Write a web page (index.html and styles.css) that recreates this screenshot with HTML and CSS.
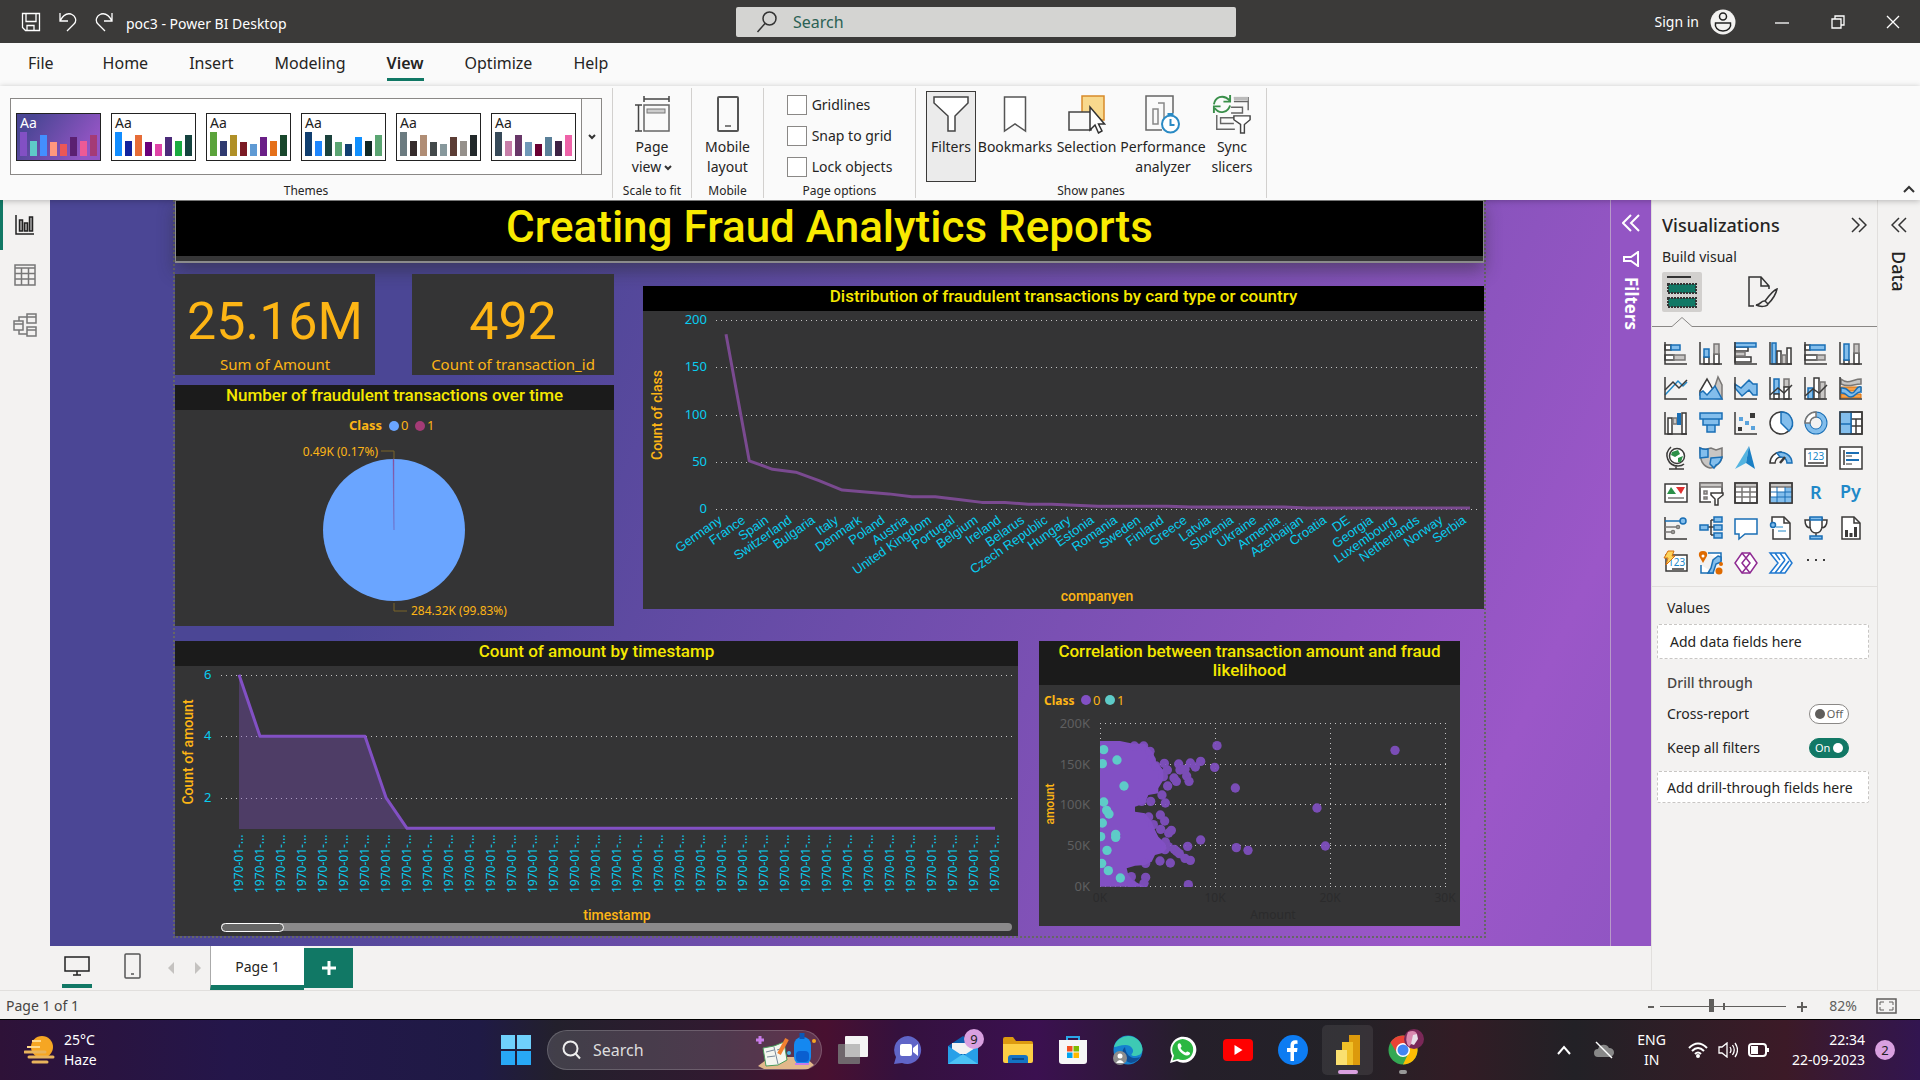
FILE: index.html
```html
<!DOCTYPE html>
<html lang="en">
<head>
<meta charset="utf-8">
<meta name="viewport" content="width=device-width, initial-scale=1">
<title>poc3 - Power BI Desktop</title>
<link rel="stylesheet" href="styles.css">
</head>
<body>
<header class="titlebar">
  <div class="titlebar-left">
    <button class="bare" aria-label="Save"><svg width="20" height="20" viewBox="0 0 20 20" class="line-white"><path d="M1.500 1.500h17v17H4.500l-3-3zM5 1.500v8h10v-8M6 18.500v-5h7v5"/></svg></button>
    <button class="bare" aria-label="Undo"><svg width="18" height="20" viewBox="0 0 18 20" class="line-white"><path d="M1 1v8h8M1 9C4 3 8 1 12 2c5 2 6 7 3 10l-7 7"/></svg></button>
    <button class="bare" aria-label="Redo"><svg width="18" height="20" viewBox="0 0 18 20" class="line-white"><path d="M17 1v8H9M17 9C14 3 10 1 6 2c-5 2-6 7-3 10l7 7"/></svg></button>
    <span class="doc-name">poc3 - Power BI Desktop</span>
  </div>
  <label class="top-search">
    <svg width="22" height="24" viewBox="0 0 22 24" fill="none" stroke="#333" stroke-width="1.500"><circle cx="13.500" cy="8.500" r="6.500"/><path d="M9 13.500 1.500 22"/></svg>
    <input type="text" placeholder="Search" aria-label="Search">
  </label>
  <div class="titlebar-right">
    <a href="#" class="signin">Sign in</a>
    <svg class="avatar" width="26" height="26" viewBox="0 0 26 26"><circle cx="13" cy="13" r="12.500" fill="#f3f2f1"/><circle cx="13" cy="7.500" r="3.500" fill="none" stroke="#222" stroke-width="1.500"/><path d="M5.500 14h15c1 4-2 8-7.500 8s-8.500-4-7.500-8z" fill="none" stroke="#222" stroke-width="1.500"/></svg>
    <button class="win-btn" aria-label="Minimize"><svg width="14" height="14" viewBox="0 0 14 14" class="line-white"><path d="M0 8h14"/></svg></button>
    <button class="win-btn" aria-label="Restore"><svg width="14" height="14" viewBox="0 0 14 14" class="line-white"><path d="M1 4h9v9H1zM4 4V1h9v9h-3"/></svg></button>
    <button class="win-btn" aria-label="Close"><svg width="14" height="14" viewBox="0 0 14 14" class="line-white"><path d="M1 1l12 12M13 1 1 13"/></svg></button>
  </div>
</header>

<nav class="tabs">
  <a href="#">File</a><a href="#">Home</a><a href="#">Insert</a><a href="#">Modeling</a><a href="#" class="active">View</a><a href="#">Optimize</a><a href="#">Help</a>
</nav>

<section class="ribbon">
  <div class="group group-themes">
    <div class="gallery">
      <div class="thumbs" id="themes"></div>
      <button class="gallery-more" aria-label="More themes"><svg width="8" height="6" viewBox="0 0 8 6" class="line-dark bold"><path d="M1 1l3 3 3-3"/></svg></button>
    </div>
    <div class="group-name">Themes</div>
  </div>
  <div class="group group-scale">
    <button class="tool"><svg width="36" height="38" viewBox="0 0 36 38" fill="none" stroke="#444" stroke-width="1.500"><path d="M10 1v6M35 1v6M10 4h25M1 10h7M1 36h7M4.500 10v26"/><rect x="10" y="10" width="25" height="26" stroke="#666" fill="#fafafa"/><rect x="13" y="14" width="18" height="4" fill="#ccc" stroke="#777" stroke-width="1"/></svg><span>Page<br>view<svg width="8" height="8" viewBox="0 0 8 8" class="line-dark bold caret"><path d="M1 2l3 3 3-3"/></svg></span></button>
    <div class="group-name">Scale to fit</div>
  </div>
  <div class="group group-mobile">
    <button class="tool"><svg width="24" height="38" viewBox="0 0 24 38" fill="none" stroke="#555" stroke-width="2"><rect x="2" y="2" width="20" height="34" rx="1"/><path d="M9 31h6" stroke-width="1.500"/></svg><span>Mobile<br>layout</span></button>
    <div class="group-name">Mobile</div>
  </div>
  <div class="group group-options">
    <div class="checks">
      <label><input type="checkbox">Gridlines</label>
      <label><input type="checkbox">Snap to grid</label>
      <label><input type="checkbox">Lock objects</label>
    </div>
    <div class="group-name">Page options</div>
  </div>
  <div class="group group-panes">
    <div class="tools">
      <button class="tool pressed"><svg width="36" height="38" viewBox="0 0 36 38" fill="#fff" stroke="#444" stroke-width="1.500"><path d="M1 2h34v6L22 21v15h-7V21L1 8z"/></svg><span>Filters</span></button>
      <button class="tool w-bookmark"><svg width="24" height="38" viewBox="0 0 24 38" fill="#fff" stroke="#555" stroke-width="1.500"><path d="M1.500 2h21v34L12 29 1.500 36z"/></svg><span>Bookmarks</span></button>
      <button class="tool w-selection"><svg width="38" height="40" viewBox="0 0 38 40"><path d="M14 2h22v24H14z" fill="#f8d98d" stroke="#d88a2a" stroke-width="1.500"/><path d="M1 18h22v18H1z" fill="#fafafa" stroke="#444" stroke-width="1.500"/><path d="M22 13v23l5-5 3.500 8 3.500-2-3.500-7h6z" fill="#fff" stroke="#333" stroke-width="1.500"/></svg><span>Selection</span></button>
      <button class="tool w-performance"><svg width="36" height="40" viewBox="0 0 36 40" fill="none" stroke="#666" stroke-width="1.500"><path d="M17 36H1V2h27v17"/><path d="M8 15h5v15H8zM13 9h6v19" stroke="#888"/><circle cx="25.500" cy="30" r="8.500" stroke="#2a8ac4" stroke-width="2" fill="#fff"/><path d="M25.500 25v6h4M22.500 20h6" stroke="#2a8ac4" stroke-width="2"/></svg><span>Performance<br>analyzer</span></button>
      <button class="tool w-sync"><svg width="40" height="42" viewBox="0 0 40 42" fill="none" stroke="#666" stroke-width="1.500"><path d="M22 4h15v13M22 8h15M4 22v15h19M12 37h8M19 14h12v6H19M24 25H8v6h14"/><path d="M22 3h15v4H22z" fill="#bbb" stroke="none"/><path d="M22 23h17v4l-6 5v9h-4v-9l-7-5z" fill="#fff" stroke="#444"/><path d="M1 11C2 4 10-1 18 7M18 1v7h-7M18 12c-2 7-11 10-16 3M1 20v-7h7" stroke="#3a8f4a" stroke-width="2"/></svg><span>Sync<br>slicers</span></button>
    </div>
    <div class="group-name">Show panes</div>
  </div>
  <button class="bare collapse" aria-label="Collapse ribbon"><svg width="12" height="8" viewBox="0 0 12 8" class="line-dark bold"><path d="M1 7l5-5 5 5"/></svg></button>
</section>

<main class="workspace">
  <nav class="rail">
    <button class="rail-btn active" aria-label="Report view"><svg width="20" height="22" viewBox="0 0 20 22" fill="none" stroke="#222" stroke-width="1.500"><path d="M1 1v19h18"/><path d="M4.500 6h3v11h-3zM9.500 9h3v8h-3zM14.500 3h3v14h-3z" fill="#aaa"/></svg></button>
    <button class="rail-btn" aria-label="Table view"><svg width="22" height="22" viewBox="0 0 22 22" fill="none" stroke="#777" stroke-width="1.500"><path d="M1 1h20v20H1zM1 4h20M1 9.500h20M1 15h20M7.500 4v17M14.500 4v17"/></svg></button>
    <button class="rail-btn" aria-label="Model view"><svg width="24" height="24" viewBox="0 0 24 24" fill="none" stroke="#777" stroke-width="1.500"><path d="M1 8h9v9H1zM1 11h9M14 1h9v9h-9zM14 4h9M14 14h9v9h-9zM14 17h9M6 8V4h8M6 17v4h8"/></svg></button>
  </nav>

  <div class="stage">
    <div class="canvas">
      <div class="page">
        <div class="headline"><h1>Creating Fraud Analytics Reports</h1></div>
        <div class="row-top">
          <div class="left-stack">
            <div class="kpis">
              <article class="kpi"><strong>25.16M</strong><span>Sum of Amount</span></article>
              <article class="kpi"><strong>492</strong><span>Count of transaction_id</span></article>
            </div>
            <article class="visual pie">
              <h2>Number of fraudulent transactions over time</h2>
              <svg viewBox="0 0 439 216" class="chart">
                <g class="legend"><text x="174" y="20" class="strong">Class</text><circle cx="219" cy="16" r="5" fill="#6aa5ff"/><text x="226" y="20">0</text><circle cx="245" cy="16" r="5" fill="#a43b76"/><text x="252" y="20">1</text>
                <text x="203" y="46" text-anchor="end" class="small">0.49K (0.17%)</text><text x="236" y="205" class="small">284.32K (99.83%)</text></g>
                <path d="M206 41h13v8M219 193v8h13" fill="none" stroke="#7b6428"/>
                <circle cx="219" cy="120" r="71" fill="#6aa5ff"/><path d="M219 120 218 49h1z" fill="#a43b76" stroke="#6c6ac0" stroke-width=".5"/>
              </svg>
            </article>
          </div>
          <article class="visual countries">
            <h2>Distribution of fraudulent transactions by card type or country</h2>
            <svg viewBox="0 0 841 298" class="chart" id="countries"></svg>
          </article>
        </div>
        <div class="row-bottom">
          <article class="visual time">
            <h2>Count of amount by timestamp</h2>
            <svg viewBox="0 0 843 270" class="chart" id="timestamps"></svg>
          </article>
          <article class="visual scatter">
            <h2>Correlation between transaction amount and fraud likelihood</h2>
            <svg viewBox="0 0 421 241" class="chart" id="scatter"></svg>
          </article>
        </div>
      </div>
      <aside class="filters">
        <button class="bare" aria-label="Expand filters"><svg width="18" height="18" viewBox="0 0 18 18" class="line-white bold"><path d="M9 1 1 9l8 8M17 1 9 9l8 8"/></svg></button>
        <svg class="funnel" width="16" height="16" viewBox="0 0 16 16" class="line-white bold"><path d="M15 1v14L8 10H1V6h7z"/></svg>
        <span>Filters</span>
      </aside>
    </div>
    <footer class="pages">
      <button class="device active" aria-label="Desktop layout"><svg width="26" height="20" viewBox="0 0 26 20" fill="none" stroke="#222" stroke-width="1.500"><path d="M1 1h24v14H1zM13 15v4M9 19h8"/></svg></button>
      <button class="device phone" aria-label="Mobile layout"><svg width="18" height="26" viewBox="0 0 18 26" fill="none" stroke="#555" stroke-width="1.500"><rect x="1" y="1" width="15" height="24" rx="1"/><path d="M7 21h3"/></svg></button>
      <button class="bare step" aria-label="Previous page"><svg width="6" height="12" viewBox="0 0 6 12"><path d="M6 0v12L0 6z" fill="#c4c2c0"/></svg></button>
      <button class="bare step" aria-label="Next page"><svg width="6" height="12" viewBox="0 0 6 12"><path d="M0 0v12l6-6z" fill="#c4c2c0"/></svg></button>
      <button class="page-tab">Page 1</button>
      <button class="add-page" aria-label="New page"><svg width="14" height="14" viewBox="0 0 14 14"><path d="M7 0v14M0 7h14" stroke="#fff" stroke-width="3"/></svg></button>
    </footer>
  </div>

  <aside class="viz">
    <div class="viz-head"><h3>Visualizations</h3><button class="bare" aria-label="Collapse"><svg width="16" height="16" viewBox="0 0 16 16" class="line-dark"><path d="M1 1l7 7-7 7M8 1l7 7-7 7"/></svg></button></div>
    <div class="build">Build visual</div>
    <div class="modes">
      <button class="mode on" aria-label="Build visual"><svg width="30" height="32" viewBox="0 0 30 32"><path d="M0 1h24" stroke="#333" stroke-width="2"/><path d="M1 8h28v9H1zM1 22h28v9H1z" fill="#117865" stroke="#333" stroke-width="2" stroke-dasharray="2 1"/></svg></button>
      <button class="mode" aria-label="Format page"><svg width="32" height="32" viewBox="0 0 32 32" class="line-dark"><path d="M7 30H2V1h12l8 9v3M14 1v9h8"/><path d="M30 13c-3 1-9 8-12 12l3 3c4-4 8-10 9-15zM18 25c-4-1-4 4-9 4 4 2 11 2 12-1"/></svg></button>
    </div>
    <svg class="notch" viewBox="0 0 226 12" height="12" preserveAspectRatio="xMinYMin slice"><path d="M0 10.500h20l10-9 10 9h600" fill="none" stroke="#8a8886"/></svg>
    <div class="viz-grid" id="viz-grid"></div>
    <div class="wells">
      <div class="well-title">Values</div>
      <div class="well">Add data fields here</div>
      <div class="well-title strong">Drill through</div>
      <div class="switch-row"><label for="cross">Cross-report</label><span class="switch"><input type="checkbox" id="cross"><i>Off</i></span></div>
      <div class="switch-row"><label for="keep">Keep all filters</label><span class="switch on"><i>On</i><input type="checkbox" id="keep" checked></span></div>
      <div class="well drill">Add drill-through fields here</div>
    </div>
  </aside>
  <aside class="data">
    <button class="bare" aria-label="Expand data"><svg width="16" height="16" viewBox="0 0 16 16" class="line-dark"><path d="M8 1 1 8l7 7M15 1 8 8l7 7"/></svg></button>
    <span>Data</span>
  </aside>
</main>

<footer class="status">
  <span>Page 1 of 1</span>
  <div class="zoom">
    <button class="bare" aria-label="Zoom out"><svg width="6" height="12" viewBox="0 0 6 12"><path d="M0 7h6" stroke="#605e5c" stroke-width="2"/></svg></button>
    <input type="range" min="0" max="100" value="40" aria-label="Zoom">
    <button class="bare" aria-label="Zoom in"><svg width="10" height="12" viewBox="0 0 10 12"><path d="M0 7h10M5 2v10" stroke="#605e5c" stroke-width="2"/></svg></button>
    <span class="percent">82%</span>
    <button class="bare" aria-label="Fit to page"><svg width="21" height="16" viewBox="0 0 21 16" fill="none" stroke="#605e5c"><path d="M1 1h19v14H1z" stroke-width="1.500"/><path d="M4 7V4h4M13 4h4v3M17 9v3h-4M8 12H4V9"/></svg></button>
  </div>
</footer>

<footer class="taskbar">
  <div class="weather">
    <svg width="32" height="30" viewBox="0 0 32 30"><circle cx="18" cy="12" r="11" fill="#f6a623"/><path d="M8 6h9M3 12h13" stroke="#ffd98a" stroke-width="2"/><path d="M1 17h20M5 22h24M9 27h14" stroke="#e8b45c" stroke-width="3" stroke-linecap="round"/></svg>
    <div>25°C<br>Haze</div>
  </div>
  <div class="apps">
    <button class="app start" aria-label="Start"><svg width="30" height="30" viewBox="0 0 30 30"><path d="M0 0h14v14H0zM16 0h14v14H16z" fill="#6fd0fb"/><path d="M0 16h14v14H0zM16 16h14v14H16z" fill="#28a8f5"/></svg></button>
    <label class="task-search">
      <svg width="20" height="20" viewBox="0 0 20 20" fill="none" stroke="#eee" stroke-width="2"><circle cx="8.500" cy="8.500" r="7"/><path d="M13.500 13.500 18 18.500"/></svg>
      <input type="text" placeholder="Search" aria-label="Search Windows">
      <svg width="60" height="38" viewBox="0 0 60 38"><path d="M2 35 14 26h35l9 8-6 4H8z" fill="#e2b88b"/><path d="M7 17l11-2 10-4 3 18-9 5-12 1z" fill="#f4f6ef" stroke="#4a9b5a"/><path d="M18 16l4 17M10 21l8-2M11 26l8-1M21 19l6-2" stroke="#789"/><path d="M31 8l-8 15" stroke="#f08030" stroke-width="4"/><path d="M4 5v8M0 9h8" stroke="#c77be8" stroke-width="3"/><rect x="38" y="6" width="17" height="28" rx="8" fill="#1488f0"/><path d="M46 2v6" stroke="#0b58b8" stroke-width="5"/><rect x="40" y="20" width="13" height="11" rx="4" fill="#0a5fd0"/><path d="M39 33h14" stroke="#c77be8" stroke-width="2"/><circle cx="58" cy="10" r="2" fill="#f5a623"/><circle cx="33" cy="22" r="2" fill="#44b5e8"/></svg>
    </label>
    <button class="app" aria-label="Task view"><svg width="30" height="30" viewBox="0 0 30 30"><rect x="7" y="1" width="23" height="21" rx="1" fill="#f4f4f4"/><rect x="0" y="9" width="22" height="20" rx="1" fill="#777" opacity=".85"/><path d="M7 9h15v13H7z" fill="#bdbdbd"/></svg></button>
    <button class="app" aria-label="Chat"><svg width="30" height="30" viewBox="0 0 30 30"><path d="M15 1a14 14 0 1 1-6 27l-8 1 2-7A14 14 0 0 1 15 1z" fill="#6065c8"/><rect x="7" y="9" width="12" height="12" rx="2" fill="#fff"/><path d="M20 13l5-4v12l-5-4z" fill="#fff"/></svg></button>
    <button class="app" aria-label="Mail"><svg width="32" height="30" viewBox="0 0 32 30"><path d="M1 11 16 1l15 10v18H1z" fill="#0c5fae"/><path d="M5 8h22v11H5z" fill="#f2f2f2"/><path d="M1 11l15 10 15-10v18H1z" fill="#27a0e8"/><path d="M1 29 16 19l15 10z" fill="#4cc2f5"/></svg><b class="badge">9</b></button>
    <button class="app" aria-label="File Explorer"><svg width="30" height="28" viewBox="0 0 30 28"><path d="M0 3q0-2 2-2h8l3 4h15q2 0 2 2v4H0z" fill="#dc9a10"/><path d="M0 8h30v17q0 2-2 2H2q-2 0-2-2z" fill="#fccf45"/><path d="M5 27v-5q0-3 3-3h14q3 0 3 3v5z" fill="#1473c4"/><path d="M9 23h12" stroke="#0a4a88" stroke-width="2"/></svg></button>
    <button class="app" aria-label="Microsoft Store"><svg width="30" height="30" viewBox="0 0 30 30"><path d="M9 6V2h12v4" fill="none" stroke="#2ba7e8" stroke-width="2"/><path d="M1 5h28v21q0 3-3 3H4q-3 0-3-3z" fill="#f6f6f6"/><path d="M9 11h5.500v5.500H9z" fill="#f25022"/><path d="M15.500 11H21v5.500h-5.500z" fill="#7fba00"/><path d="M9 17.500h5.500V23H9z" fill="#00a4ef"/><path d="M15.500 17.500H21V23h-5.500z" fill="#ffb900"/></svg></button>
    <button class="app" aria-label="Edge"><svg width="30" height="30" viewBox="0 0 30 30"><circle cx="15" cy="15" r="14.500" fill="#1580cf"/><path d="M1 12A14.500 14.500 0 0 1 29.500 14c0 5-4 7-8 7-3 0-4-1-2-3 2-3-1-8-7-8-5 0-9 2-11.500 2z" fill="#3dcab4"/><path d="M12 12c-5 4-3 14 6 16 5-1 8-4 9-6-6 3-14 0-15-10z" fill="#0f4f98"/><circle cx="7" cy="23" r="7" fill="#8d8d8d"/><circle cx="7" cy="21" r="2.500" fill="#fff"/><path d="M3 28q4-6 8 0z" fill="#fff"/></svg></button>
    <button class="app" aria-label="WhatsApp"><svg width="28" height="28" viewBox="0 0 28 28"><path d="M1 27l2-7a13 13 0 1 1 5 5z" fill="#fff"/><path d="M3.500 24.500l1.500-5a10.500 10.500 0 1 1 4 3.500z" fill="#2cb742"/><path d="M9 8c2-2 3 0 3.500 2 .5 1-1 1.500-1 2 1 2 3 4 5 4.500 1 0 1-1.500 2-1 3 1 3 2 2 3-4 4-14-5-11.500-10.500z" fill="#fff"/></svg></button>
    <button class="app" aria-label="YouTube"><svg width="30" height="22" viewBox="0 0 30 22"><rect width="30" height="22" rx="4" fill="#f00"/><path d="M11.500 6v10l8-5z" fill="#fff"/></svg></button>
    <button class="app" aria-label="Facebook"><svg width="30" height="30" viewBox="0 0 30 30"><circle cx="15" cy="15" r="15" fill="#0d7cf2"/><path d="M12.500 26V17H9v-4h3.500v-3c0-4 3-5.500 7-4.500v3.500c-2.500-.5-3.500 0-3.500 2v2h3.500l-.5 4h-3v9z" fill="#fff"/></svg></button>
    <button class="app tile" aria-label="Power BI"><svg width="26" height="30" viewBox="0 0 26 30"><path d="M14 0h11v30H14z" fill="#dc9a0c"/><path d="M7 7h11v23H7z" fill="#f0c028"/><path d="M1 15h11v15H1z" fill="#fae070"/></svg></button>
    <button class="app dot" aria-label="Chrome"><svg width="30" height="30" viewBox="0 0 30 30"><circle cx="15" cy="15" r="14.500" fill="#34a853"/><path d="M2.500 7.500A14.500 14.500 0 0 1 28 8.500L15 9 9 18z" fill="#ea4335"/><path d="M28 8.500A14.500 14.500 0 0 1 15 29.500L21 17 17 8.500z" fill="#fbbc04"/><circle cx="15" cy="15" r="7" fill="#fff"/><circle cx="15" cy="15" r="5.500" fill="#4285f4"/></svg><svg class="profile" width="20" height="20" viewBox="0 0 20 20"><circle cx="10" cy="10" r="10" fill="#7a2858"/><path d="M4 3q7-3 9 2l-3 6-5 7q-5-6-1-15z" fill="#d98ab0"/><path d="M9 6l4-1 1 5-4 6-3-1z" fill="#e8e0e8"/></svg></button>
  </div>
  <div class="tray">
    <button class="bare" aria-label="Hidden icons"><svg width="14" height="10" viewBox="0 0 14 10" class="line-white bold"><path d="M1 9l6-7 6 7"/></svg></button>
    <svg class="cloud" width="22" height="18" viewBox="0 0 22 18"><path d="M5 16a4 4 0 0 1 0-8 6 6 0 0 1 11-1 4.500 4.500 0 0 1 1 9z" fill="#888"/><path d="M3 1l16 16" stroke="#fff" stroke-width="1.500"/></svg>
    <div class="lang">ENG<br>IN</div>
    <svg width="20" height="16" viewBox="0 0 20 16" class="line-white bold"><path d="M1 6q9-9 18 0M4 9q6-6 12 0M7 12q3-3 6 0"/><circle cx="10" cy="14" r="1"/></svg>
    <svg width="20" height="16" viewBox="0 0 20 16" class="line-white"><path d="M1 5h3l5-4v14l-5-4H1zM12 5q2 3 0 6M14.500 3q3.500 5 0 10M17 1q5 7 0 14"/></svg>
    <svg width="22" height="14" viewBox="0 0 22 14" class="line-white bold"><rect x="1" y="1" width="17" height="12" rx="3"/><path d="M20 5v4"/><path d="M4 4h5v6H4z" fill="#fff"/></svg>
    <div class="clock">22:34<br>22-09-2023</div>
    <b class="bell">2</b>
  </div>
</footer>
<script src="app.js"></script>
</body>
</html>
```
FILE: styles.css
```css
* { box-sizing: border-box; }
body {
  margin: 0;
  min-height: 100vh;
  display: grid;
  grid-template-rows: auto auto auto 1fr auto auto;
  font: 14px/20px "Noto Sans", "Open Sans", sans-serif;
  color: #252423;
  background: #f3f2f1;
}
button, input { font: inherit; color: inherit; }
button { border: 0; background: none; padding: 0; }
a { color: inherit; text-decoration: none; }
svg { display: block; flex: none; }
h1, h2, h3 { margin: 0; font-weight: 500; }
.bare { display: flex; align-items: center; }
.line-white { fill: none; stroke: #fff; stroke-width: 1.3; }
.line-dark { fill: none; stroke: #333; stroke-width: 1.5; }
.line-white.bold, .line-dark.bold { stroke-width: 2; }

/* title bar */
.titlebar { height: 43px; background: #3b3a39; color: #fff; display: grid; grid-template-columns: 1fr 500px 1fr; align-items: center; }
.titlebar-left { display: flex; align-items: center; gap: 18px; padding-left: 21px; }
.doc-name { margin-left: -5px; padding-top: 5px; }
.top-search { height: 30px; margin: 0 -26px 0 26px; background: #d4d4d2; border-radius: 2px; display: flex; align-items: center; gap: 15px; padding-left: 20px; }
.top-search input { border: 0; background: none; padding: 0; font-size: 16px; width: 100%; outline: 0; }
.top-search input::placeholder { color: #2b6154; opacity: 1; }
.titlebar-right { display: flex; justify-content: flex-end; align-items: center; }
.avatar { margin: 0 18px 0 11px; }
.win-btn { width: 56px; height: 43px; display: flex; align-items: center; justify-content: center; }
.win-btn:last-child { width: 54px; }

/* ribbon */
.tabs { display: flex; height: 43px; background: #fafafa; font-size: 16px; padding: 8px 0 0 28px; gap: 41px; }
.tabs a { line-height: 24px; height: 30px; }
.tabs a:first-child { margin-right: 8px; }
.tabs .active { font-weight: 600; border-bottom: 3px solid #117865; }
.ribbon { display: flex; background: #fafafa; height: 114px; box-shadow: 0 1px 6px rgba(0,0,0,.25); position: relative; z-index: 1; }
.group { margin: 2px 0; border-right: 1px solid #d2d0ce; display: flex; flex-direction: column; align-items: center; }
.group-name { margin-top: auto; font-size: 12px; line-height: 14px; }
.group-themes { width: 613px; padding: 10px 10px 0; }
.group-scale { width: 79px; }
.group-mobile { width: 72px; }
.group-options { width: 152px; }
.group-panes { width: 351px; }
.gallery { width: 592px; height: 77px; border: 1px solid #8a8886; background: #fff; display: flex; }
.thumbs { flex: 1; display: flex; gap: 10px; align-items: center; padding-left: 5px; }
.thumbs button { background: #fff; }
.thumb-name { font: 14px "Noto Sans", sans-serif; }
.gallery-more { width: 20px; border-left: 1px solid #8a8886; background: #fafafa; display: grid; place-items: center; }
.tool { display: flex; flex-direction: column; align-items: center; height: 91px; margin-top: 3px; padding-top: 2px; border: 1px solid transparent; }
.tool > svg { height: 40px; }
.tool span { margin-top: 3px; white-space: nowrap; }
.caret { display: inline-block; margin-left: 3px; }
.checks { padding: 7px 0 0; display: flex; flex-direction: column; gap: 11px; }
.checks label { display: flex; align-items: center; gap: 5px; }
.checks input { appearance: none; width: 20px; height: 20px; margin: 0; border: 1px solid #8a8886; background: #fff; }
.tools { display: flex; width: 100%; padding-left: 10px; }
.pressed { width: 50px; background: #ebebeb; border-color: #3b3a39; }
.w-bookmark { width: 78px; }
.w-selection { width: 65px; }
.w-performance { width: 88px; }
.w-sync { width: 50px; }
.collapse { margin: auto 5px 7px auto; }

/* workspace */
.workspace { display: flex; min-width: 0; }
.rail { width: 50px; flex: none; }
.rail-btn { width: 50px; height: 50px; display: grid; place-items: center; }
.rail-btn.active { box-shadow: inset 3px 0 #117865; }
.stage { flex: 1; min-width: 0; display: flex; flex-direction: column; }
.canvas { flex: 1; display: flex; background: linear-gradient(115deg, #4b4695 25%, #9b57c8 88%, #8f55c2 100%); }
.page { flex: 1; min-width: 0; margin: 0 124px 8px 123px; border: 2px dotted #666; border-top: 0; font-family: Roboto, "Noto Sans", sans-serif; }
.headline { height: 63px; border: 1px solid #8b8b8b; border-bottom-width: 2px; background: linear-gradient(#000 55px, #363637 55px); box-shadow: 0 8px 16px rgba(40,40,40,.45); }
.headline h1 { text-align: center; color: #f8ea00; font-size: 44px; line-height: 52px; }
.row-top { display: grid; grid-template-columns: 439fr 841fr; gap: 29px; padding-top: 11px; }
.left-stack { display: flex; flex-direction: column; gap: 10px; }
.kpis { display: grid; grid-template-columns: 200fr 202fr; gap: 37px; }
.kpi { height: 101px; background: #343435; color: #fdb515; display: flex; flex-direction: column; align-items: center; padding-top: 18px; }
.kpi strong { font-size: 52px; line-height: 60px; font-weight: 400; }
.kpi span { font: 15px/20px "Noto Sans", sans-serif; margin-top: 2px; white-space: nowrap; }
.visual { background: #343435; }
.visual h2 { background: #1b1b1b; color: #f5e800; font-size: 17px; line-height: 19px; padding: 1px 12px 5px; text-align: center; }
.countries { margin-top: 12px; align-self: start; }
.countries h2 { background: #000; }
.row-bottom { display: grid; grid-template-columns: 843fr 421fr; gap: 21px; padding: 15px 24px 0 0; align-items: start; }
.chart { width: 100%; height: auto; }
.legend { fill: #fdb515; font: 13px "Noto Sans", sans-serif; }
.strong { font-weight: 700; }
.small { font-size: 12px; }
.gridline { stroke: #c4c4c4; stroke-width: 1; stroke-dasharray: 1 4; }
.tick { fill: #08cdf0; font: 13px "Noto Sans", sans-serif; }
.tick-slant { fill: #08cdf0; font: 13px "Liberation Sans", sans-serif; }
.tick-up { fill: #08cdf0; font: 12px "Noto Sans", sans-serif; }
.tick-dim { fill: #5f5f60; font: 13px "Noto Sans", sans-serif; }
.tick-dark { fill: #2b2b2c; font: 12px "Noto Sans", sans-serif; }
.axis { fill: #fdb515; font: 500 14px Roboto, sans-serif; text-anchor: middle; }
.axis.tiny { font-size: 12px; }
.filters { width: 41px; border-left: 1px solid #b79ac9; background: #9355c4; color: #fff; display: flex; flex-direction: column; align-items: center; padding-top: 14px; gap: 19px; }
.funnel { fill: none; stroke: #fff; stroke-width: 2; }
.filters span { writing-mode: vertical-rl; font-weight: 700; font-size: 17px; margin-top: -9px; }

/* page tabs */
.pages { height: 44px; display: flex; align-items: center; }
.device { height: 39px; width: 30px; margin-left: 12px; display: grid; place-items: center; border-bottom: 4px solid transparent; }
.device.active { border-color: #117865; }
.device.phone { margin: 0 9px 0 26px; }
.step { width: 27px; justify-content: center; }
.page-tab { align-self: stretch; width: 94px; background: #fff; border-left: 1px solid #aaa; border-bottom: 5px solid #117865; padding-top: 3px; margin-left: -1px; }
.add-page { width: 49px; height: 40px; background: #117865; display: grid; place-items: center; }

/* visualizations pane */
.viz { width: 227px; flex: none; border-left: 1px solid #e1dfdd; border-right: 1px solid #e1dfdd; }
.viz-head { display: flex; justify-content: space-between; padding: 14px 10px 0 10px; }
.viz-head h3 { font-size: 18px; line-height: 22px; font-weight: 500; }
.build { padding: 11px 10px 1px; font-size: 14px; }
.modes { display: flex; gap: 41px; padding: 4px 10px; }
.mode { width: 40px; height: 40px; display: grid; place-items: center; border-radius: 2px; }
.mode.on { background: #d2d0ce; }
.notch { width: 100%; }
.viz-grid { display: grid; grid-template-columns: repeat(6, 24px); gap: 11px; padding: 13px 12px 11px; border-bottom: 1px solid #e1dfdd; }
.viz-grid button { width: 24px; height: 24px; }
.viz-grid svg { overflow: visible; }
.viz-letter { font: 600 18px "Noto Sans", sans-serif; fill: #2088c8; }
.viz-digits { font: 10px "Noto Sans", sans-serif; fill: #2088c8; }
.wells { padding: 11px 8px 0 5px; }
.well-title { padding-left: 10px; }
.well-title.strong { font-weight: 500; margin-top: 14px; color: #484644; }
.well { height: 35px; margin-top: 6px; border: 1px dashed #c8c6c4; border-radius: 2px; background: #fff; line-height: 33px; padding-left: 12px; white-space: nowrap; }
.well.drill { height: 32px; line-height: 32px; padding-left: 9px; margin-top: 13px; }
.switch-row { display: flex; justify-content: space-between; align-items: center; padding: 0 20px 0 10px; margin-top: 11px; }
.switch-row + .switch-row { margin-top: 14px; }
.switch { width: 40px; height: 20px; border: 1px solid #8a8886; border-radius: 10px; background: #fff; display: flex; align-items: center; justify-content: space-between; padding: 0 5px; font-size: 11px; color: #605e5c; }
.switch i { font-style: normal; }
.switch input { appearance: none; margin: 0; width: 10px; height: 10px; border-radius: 50%; background: #605e5c; }
.switch.on { background: #117865; border-color: #117865; color: #fff; }
.switch.on input { background: #fff; }
.data { width: 42px; flex: none; display: flex; flex-direction: column; align-items: center; padding-top: 17px; gap: 18px; }
.data span { writing-mode: vertical-rl; font-size: 18px; font-weight: 500; }

/* status bar */
.status { height: 29px; border-top: 1px solid #e1dfdd; display: flex; align-items: center; justify-content: space-between; padding: 1px 23px 0 6px; color: #484644; }
.zoom { display: flex; align-items: center; gap: 6px; color: #605e5c; }
.zoom .percent { margin: 0 13px 0 16px; }
.zoom input { appearance: none; width: 126px; height: 14px; margin: 0 5px 0 0; background: linear-gradient(#605e5c, #605e5c) 63px 4px / 2px 7px no-repeat, linear-gradient(#605e5c, #605e5c) 0 7px / 100% 1px no-repeat; }
.zoom input::-webkit-slider-thumb { appearance: none; width: 5px; height: 13px; background: #605e5c; }

/* taskbar */
.taskbar { height: 61px; border-top: 1px solid #000; color: #fff; display: grid; grid-template-columns: 1fr auto 1fr; align-items: center; background: linear-gradient(90deg, #2e1238 0, #24164a 12%, #1f1a45 25%, #23202c 29%, #301a30 37%, #481030 43%, #34113e 47%, #3b1050 54%, #251f2a 62%, #232227 70%, #321c25 76%, #222126 82%, #3c1a27 93%, #321550 100%); line-height: 20px; }
.weather { display: flex; gap: 8px; padding-left: 24px; align-items: center; font-size: 14px; }
.apps { display: flex; align-items: center; margin-right: 2px; }
.app { width: 55px; height: 50px; display: grid; place-items: center; position: relative; }
.task-search { width: 275px; height: 40px; margin: 0 3px 0 4px; border-radius: 20px; border: 1px solid rgba(255,255,255,.18); background: rgba(255,255,255,.14); display: flex; align-items: center; padding: 0 5px 0 14px; gap: 11px; }
.task-search input { flex: 1; min-width: 0; border: 0; padding: 0; background: none; font-size: 16px; outline: 0; }
.task-search input::placeholder { color: #ddd; opacity: 1; }
.badge, .bell { width: 20px; height: 20px; border-radius: 50%; background: #d9a0e0; color: #222; font-size: 13px; font-weight: 400; text-align: center; line-height: 20px; }
.badge { position: absolute; right: 6px; top: 4px; }
.profile { position: absolute; right: 6px; top: 4px; }
.tile { background: rgba(255,255,255,.08); border-radius: 5px; width: 51px; margin: 0 2px; }
.tile::after, .dot::after { content: ""; position: absolute; bottom: 1px; width: 20px; height: 4px; border-radius: 2px; background: #d9a0e0; }
.dot::after { width: 8px; background: #999; }
.tray { display: flex; align-items: center; justify-content: flex-end; padding-right: 25px; gap: 10px; }
.cloud { margin: 0 12px; }
.lang { text-align: center; margin-right: 12px; }
.clock { text-align: right; margin-left: 12px; }
```
FILE: app.js
```js
const range = n => Array.from({ length: n }, (_, i) => i);
const fill = (id, html) => { document.getElementById(id).innerHTML = html; };

/* theme gallery */
const themes = [
  ['#8250c4', '#5ecbc8', '#438fff', '#ff977e', '#eb5757', '#5b2071', '#ec5a96', '#a43b76'],
  ['#118dff', '#12239e', '#e66c37', '#6b007b', '#e044a7', '#4b2b7a', '#1aab40', '#15433f'],
  ['#5ba33b', '#2f3a70', '#b09027', '#7b1a24', '#5f9ad4', '#6a1f87', '#e5701a', '#18472c'],
  ['#113f70', '#1d86ff', '#1b423c', '#5aa572', '#113f70', '#1090ff', '#102824', '#5aa572'],
  ['#6b7b80', '#352b2b', '#b08d75', '#43494a', '#87989c', '#5c3d35', '#95908b', '#22292b'],
  ['#374a59', '#c77ea9', '#683768', '#6f98b8', '#6a0032', '#5a8099', '#3d2244', '#ee62a8']
];
const heights = [24, 15, 21, 14, 12, 19, 15, 21];
fill('themes', themes.map((colors, t) => `<button aria-label="Theme ${t + 1}"><svg width="85" height="48" viewBox="0 0 85 48">
  <defs><linearGradient id="violet" x2="1" y2=".4"><stop offset=".2" stop-color="#4b4695"/><stop offset="1" stop-color="#9355c4"/></linearGradient></defs>
  <rect x=".5" y=".5" width="84" height="47" fill="${t ? '#fff' : 'url(#violet)'}" stroke="#222"/>
  <text x="4" y="15" class="thumb-name" fill="${t ? '#222' : '#fff'}">Aa</text>
  ${colors.map((c, i) => `<rect x="${4 + i * 10}" y="${43 - heights[i]}" width="7" height="${heights[i]}" fill="${c}"/>`).join('')}
  </svg></button>`).join(''));

/* count of class by country */
const countries = ['Germany', 'France', 'Spain', 'Switzerland', 'Bulgaria', 'Italy', 'Denmark', 'Poland', 'Austria', 'United Kingdom', 'Portugal', 'Belgium', 'Ireland', 'Belarus', 'Czech Republic', 'Hungary', 'Estonia', 'Romania', 'Sweden', 'Finland', 'Greece', 'Latvia', 'Slovenia', 'Ukraine', 'Armenia', 'Azerbaijan', 'Croatia', 'DE', 'Georgia', 'Luxembourg', 'Netherlands', 'Norway', 'Serbia'];
const counts = [185, 51, 42, 39, 30, 20, 18, 16, 13, 13, 10, 7, 7, 5, 5, 4, 3, 3, 3, 3, 2, 2, 2, 2, 2, 1, 1, 1, 1, 1, 1, 1, 1];
const cx = i => 83 + i * 23.25;
const cy = v => 198 - v * 0.945;
fill('countries',
  [0, 50, 100, 150, 200].map(v => `<path class="gridline" d="M73 ${Math.round(cy(v)) + 0.5}H836"/><text class="tick" x="64" y="${cy(v) + 4}" text-anchor="end">${v}</text>`).join('') +
  `<polyline points="${counts.map((v, i) => `${cx(i)},${cy(v)}`).join(' ')}" fill="none" stroke="#7a4a90" stroke-width="3" stroke-linejoin="round"/>` +
  countries.map((n, i) => `<text class="tick-slant" text-anchor="end" transform="translate(${cx(i) - 3} ${211}) rotate(-35)">${n}</text>`).join('') +
  `<text class="axis" transform="translate(19 104) rotate(-90)">Count of class</text><text class="axis" x="454" y="290">companyen</text>`);

/* count of amount by timestamp */
const series = [6, 4, 4, 4, 4, 4, 4, 2].concat(range(29).map(() => 1));
const tx = i => 64 + i * 21;
const ty = v => 193 - v * 30.7;
const line = series.map((v, i) => `${tx(i)},${ty(v)}`).join(' ');
fill('timestamps',
  [2, 4, 6].map(v => `<path class="gridline" d="M46 ${Math.round(ty(v)) + 0.5}H837"/><text class="tick" x="29" y="${ty(v) + 4}">${v}</text>`).join('') +
  `<polygon points="${line} ${tx(36)},163 ${tx(0)},163" fill="#8250c4" opacity=".35"/>` +
  `<polyline points="${line}" fill="none" stroke="#8250c4" stroke-width="3" stroke-linejoin="round"/>` +
  series.map((v, i) => `<text class="tick-up" transform="translate(${tx(i) + 4} 227) rotate(-90)">1970-01-…</text>`).join('') +
  `<text class="axis" transform="translate(18 86) rotate(-90)">Count of amount</text><text class="axis" x="442" y="254">timestamp</text>
  <rect x="46" y="257" width="791" height="8" rx="4" fill="#8b8a8b"/><rect x="46.5" y="257.5" width="62" height="8" rx="4" fill="#666" stroke="#fff"/>`);

/* transaction amount against amount, drawn on a grid three units to the pixel */
const cloud = '237,333 300,333 340,341 375,341 400,370 408,395 430,420 430,450 415,475 415,490 385,495 375,520 345,530 345,545 375,550 395,575 405,600 415,620 435,640 440,655 430,668 405,675 395,695 375,705 345,707 320,715 325,735 340,752 375,770 237,770';
const genuine = [[343, 348], [371, 348], [390, 364], [394, 390], [408, 408], [433, 400], [442, 420], [430, 440], [443, 468], [462, 444], [469, 454], [476, 402], [480, 420], [495, 418], [511, 399], [500, 438], [507, 454], [526, 411], [542, 394], [584, 412], [591, 347], [646, 474], [891, 534], [1125, 361], [916, 648], [649, 653], [684, 661], [542, 630], [503, 649], [505, 764], [426, 495], [436, 519], [392, 514], [365, 514], [421, 555], [434, 573], [386, 561], [400, 584], [422, 598], [446, 609], [454, 601], [436, 636], [445, 650], [435, 659], [463, 658], [470, 664], [478, 671], [495, 685], [511, 691], [451, 699], [420, 693], [377, 700], [334, 740], [377, 742], [372, 760], [335, 762]];
const fraud = [[251, 359], [247, 401], [291, 390], [312, 468], [251, 516], [260, 541], [267, 552], [247, 579], [242, 620], [287, 613], [287, 622], [261, 661], [245, 700], [265, 722], [301, 744]];
const dots = (points, color) => points.map(([x, y]) => `<circle cx="${x}" cy="${y}" r="14" fill="${color}"/>`).join('');
fill('scatter',
  `<g class="legend"><text x="5" y="20" class="strong small">Class</text><circle cx="47" cy="15" r="5" fill="#8250c4"/><text x="54" y="20">0</text><circle cx="71" cy="15" r="5" fill="#5ecbc8"/><text x="78" y="20">1</text></g>` +
  [200, 150, 100, 50, 0].map((v, i) => `<path class="gridline" d="M61 ${Math.round(38 + i * 40.7) + 0.5}H407"/><text class="tick-dim" x="51" y="${43 + i * 40.7}" text-anchor="end">${v}K</text>`).join('') +
  range(4).map(i => `<path class="gridline" d="M${61.5 + i * 115} 38V201"/><text class="tick-dark" x="${61 + i * 115}" y="217" text-anchor="middle">${i ? i + '0K' : '0K'}</text>`).join('') +
  `<svg x="61" y="38" width="360" height="164" viewBox="240 279 1080 492"><polygon points="${cloud}" fill="#8250c4"/><g opacity=".9">${dots(genuine, '#8250c4')}</g>${dots(fraud, '#5ecbc8')}</svg>
  <text class="axis tiny" transform="translate(15 119) rotate(-90)">amount</text><text class="tick-dark" x="234" y="234" text-anchor="middle">Amount</text>`);

/* visual types */
const K = 'fill="none" stroke="#3b3a39" stroke-width="1.500"';
const B = 'fill="#83beec" stroke="#1a6fb5" stroke-width="1.500"';
const G = 'fill="#c8c6c4" stroke="#797775" stroke-width="1.500"';
const W = 'fill="#fff" stroke="#3b3a39" stroke-width="1.500"';
const p = (style, d) => `<path ${style} d="${d}"/>`;
const axes = p(K, 'M1 1v22h22');
const icons = {
  'Stacked bar': p(W, 'M1 4h6v5H1zM1 14h9v5H1z') + p(B, 'M7 4h9v5H7z') + p(G, 'M10 14h11v5H10z') + axes,
  'Stacked column': p(W, 'M5 16h5v7H5zM15 13h5v10h-5z') + p(B, 'M5 8h5v8H5z') + p(G, 'M15 3h5v10h-5z') + axes,
  'Clustered bar': p(W, 'M1 6h13v4H1zM1 16h16v5H1z') + p(B, 'M1 2h21v4H1z') + p(G, 'M1 11h10v4H1z') + axes,
  'Clustered column': p(B, 'M3 2h4v21H3z') + p(W, 'M8 10h4v13H8zM18 7h4v16h-4z') + p(G, 'M13 14h4v9h-4z') + axes,
  'Full stacked bar': p(W, 'M1 4h5v5H1zM1 14h12v5H1z') + p(B, 'M6 4h15v5H6z') + p(G, 'M13 14h8v5h-8z') + axes,
  'Full stacked column': p(W, 'M5 19h5v4H5zM15 12h5v11h-5z') + p(B, 'M5 3h5v16H5z') + p(G, 'M15 3h5v9h-5z') + axes,
  'Line': p('fill="none" stroke="#2088c8" stroke-width="1.500"', 'M1 19 14 5l5 5 4-4') + p(K, 'M1 14 9 6l6 6 8-8') + axes,
  'Area': p(G, 'M12 22 19 1l4 8v14z') + p(W, 'M1 15 8 3l9 16H1z') + p(B, 'M1 23V17l3-2 4 4 8-9 7 13z'),
  'Stacked area': p(B, 'M1 8l6 4 8-8 4 4h4v11h-4l-4-5-7 6-7-8z') + axes,
  'Line and stacked column': p(B, 'M5 3h5v15H5z') + p(G, 'M15 3h5v8h-5z') + p(W, 'M5 18h5v5H5zM15 11h5v12h-5z') + axes + p(K, 'M1 19l8-7 6 5 8-8'),
  'Line and clustered column': p(B, 'M4 12h5v11H4z') + p(W, 'M10 2h5v21h-5z') + p(G, 'M16 6h5v17h-5z') + axes + p(K, 'M1 20l8-7 6 4 8-8'),
  'Ribbon': p('fill="#f5a04a" stroke="#d8700c"', 'M2 11h20v4H2zM2 18h20v4H2z') + p(G, 'M2 3c7 6 12 0 20 0v5c-8 0-12 4-20 0z') + p(B, 'M2 12c8-1 7 5 11 5s4-8 9-6v5c-5-1-5 5-10 5s-4-5-10-4z') + axes,
  'Waterfall': p(W, 'M4 7h4v16H4zM18 2h4v21h-4z') + p(G, 'M9 7h4v6H9z') + p('fill="#1a6fb5"', 'M13 2h4v12h-4z') + axes,
  'Funnel': p(B, 'M1 2h22v6H1zM4 8h16v6H4zM8 14h8v7H8z'),
  'Scatter': axes + p('fill="#3b3a39"', 'M16 2h5v5h-5zM4 16h4v4H4z') + p('fill="#5aa3dc"', 'M5 6h4v4H5zM11 10h4v4h-4zM17 15h4v4h-4z'),
  'Pie': `<circle cx="12" cy="12" r="11" ${W}/>` + p(B, 'M12 12V1a11 11 0 0 1 8 19z'),
  'Donut': `<circle cx="12" cy="12" r="8.500" fill="none" stroke="#1a6fb5" stroke-width="6"/><circle cx="12" cy="12" r="8.500" fill="none" stroke="#83beec" stroke-width="4"/>` + p(G.replace('#c8c6c4', '#fff'), 'M1 12A11 11 0 0 1 12 1v5a6 6 0 0 0-6 6z'),
  'Treemap': p(W, 'M12 1h11v22H12zM12 8h11M17 8v15M12 15h11') + p(B, 'M1 1h11v12H1zM1 13h11v10H1z') + p(K, 'M1 1h22v22H1z'),
  'Map': `<circle cx="13" cy="10" r="7.500" ${W}/>` + p('fill="#2c9048"', 'M8 6l6-2 2 4-5 3-4-2zM14 12l5-2-2 6h-3z') + p(K, 'M7 1C-1 8 4 20 14 20q4 0 6-2M12 20v3M5 23h15'),
  'Filled map': p(G, 'M1 2q4 2 7 1l4-1 5 2 6-2v10q-1 4-5 7-3 3-7 3-5-1-8-6-2-4-2-14z') + p(B, 'M1 2q4 2 8 1v8l-8 1zM12 12l11-1q-2 7-6 8l-2 3-4-4z'),
  'Azure map': p('fill="#54b4e0"', 'M15 0 1 23l11-6z') + p('fill="#1a7fc4"', 'M15 0l6 23-9-6z'),
  'Gauge': p(G.replace('#797775', '#3b3a39').replace('#c8c6c4', '#fff'), 'M1 17a11 11 0 0 1 11-11v5a6 6 0 0 0-6 6z') + p(B, 'M8 7a11 11 0 0 1 15 10h-5a6 6 0 0 0-7-6z') + p('stroke="#3b3a39" stroke-width="2.500"', 'M11 17l5-6'),
  'Card': p(W, 'M1 3h22v17H1z') + '<text x="3" y="14" class="viz-digits">123</text>' + p(K, 'M4 17h16'),
  'Multi-row card': p(W, 'M1 1h22v22H1zM5 4v15') + p('stroke="#1a6fb5" stroke-width="2"', 'M7 7h13M7 14h13') + p('stroke="#797775" stroke-width="1.500"', 'M7 10h6M7 18h6'),
  'KPI': p(W, 'M1 3h22v18H1z') + p('fill="#2c9048"', 'M3 13l4-7 5 7z') + p('fill="#e03030"', 'M12 6h9l-4 7z') + p('stroke="#797775" stroke-width="1.500"', 'M4 17h16'),
  'Slicer': p(W, 'M12 21H1V2h22v10') + p(G, 'M1 2h22v4H1zM5 10h3v3H5zM5 16h3v2H5z') + p(W, 'M12 12h12v2l-5 4v6h-3v-6l-4-4z'),
  'Table': p(W, 'M1 2h22v20H1z') + p(G, 'M1 2h22v4H1zM1 11h22M1 16h22M8 6v16M16 6v16') + p(K, 'M1 2h22v20H1z'),
  'Matrix': p(W, 'M1 2h22v20H1z') + p('fill="#83beec"', 'M16 6h7v16H1v-6h7v-5h8z') + p(G, 'M1 2h22v4H1z') + p('fill="none" stroke="#1a6fb5"', 'M8 6v16M16 6v16M1 11h22M1 16h22') + p(K, 'M1 2h22v20H1z'),
  'R script': '<text x="6" y="18" class="viz-letter">R</text>',
  'Python': '<text x="1" y="17" class="viz-letter">Py</text>',
  'Key influencers': axes + p('stroke="#1a6fb5" stroke-width="1.500"', 'M1 5h17') + `<circle cx="19" cy="5" r="3" ${B}/><circle cx="14" cy="11" r="1.500" ${G}/><circle cx="9" cy="16" r="1.500" ${G}/>` + p('stroke="#797775" stroke-width="1.500"', 'M1 11h11M1 16h6'),
  'Decomposition tree': p(K, 'M9 11h6M12 4v15M12 4h4M12 19h4') + p(B, 'M1 9h8v5H1zM15 1h8v5h-8zM15 9h8v5h-8zM15 17h8v5h-8z'),
  'Q and A': p('fill="#fff" stroke="#1a6fb5" stroke-width="1.500"', 'M1 3h22v15H11l-6 5v-5H1z'),
  'Narrative': p(W, 'M3 7V1h12l6 6v16H4V13') + p(K, 'M15 1v6h6') + `<circle cx="4" cy="9" r="2.500" ${B}/>` + p('stroke="#2088c8"', 'M7 11h7M9 15h8'),
  'Goals': p(W, 'M6 2h12v9q-1 6-6 6t-6-6zM6 4H1q0 8 6 8M18 4h5q0 8-6 8M12 17v4') + p(B, 'M6 1h12v3H6zM6 20h12v3H6z'),
  'Paginated report': p(W, 'M3 1h12l6 6v16H3z') + p(K, 'M15 1v6h6') + p('fill="#3b3a39"', 'M6 14h3v7H6zM10.500 17h3v4h-3zM15 11h3v10h-3z'),
  'Card (new)': p(W, 'M2 4h21v16H2z') + '<text x="4" y="15" class="viz-digits">123</text>' + p('fill="#fcd45c" stroke="#d8700c"', 'M4 0h6L8 5h3L2 14l2-7H0z') + p(K, 'M8 18h12'),
  'ArcGIS': p('fill="#fff" stroke="#1a6fb5" stroke-width="1.500"', 'M9 2h13v8M2 14v8h13') + p(B, 'M19 5l3 1v5l-5 2-3 9H9l3-5 2-8z') + p('fill="#de6a00"', 'M4 0q5 0 4 5l-4 7-4-7q-1-5 4-5z') + '<circle cx="4" cy="5" r="1.500" fill="#fff"/><circle cx="20" cy="20" r="3.500" fill="#de6a00"/><circle cx="22" cy="13" r="2" fill="#de6a00"/>',
  'Power Apps': p('fill="#fff" stroke="#8f2b93" stroke-width="1.500"', 'M8 2h8l7 10-7 10H8L1 12z') + p('fill="none" stroke="#8f2b93" stroke-width="1.500"', 'M8 2l8 10-4 5-4-5 8-10M12 17l-4 5M12 17l4 5'),
  'Power Automate': p('fill="#fff" stroke="#1f78d0" stroke-width="1.500"', 'M1 2h15l7 10-7 10H1l8-10zM6 2l5 7M11 2l5 7M16 9 6 22M20 10 11 22'),
  'More': '<circle cx="4" cy="9" r="1"/><circle cx="12" cy="9" r="1"/><circle cx="20" cy="9" r="1"/>'
};
fill('viz-grid', Object.entries(icons).map(([name, art]) => `<button aria-label="${name}"><svg width="24" height="24" viewBox="0 0 24 24">${art}</svg></button>`).join(''));
```
